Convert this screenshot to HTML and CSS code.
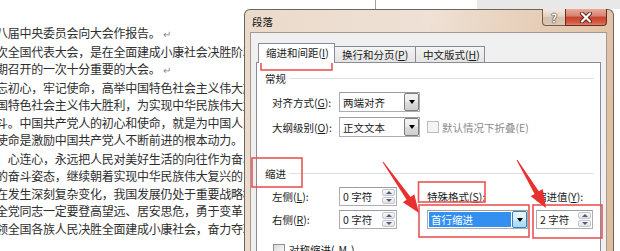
FILE: index.html
```html
<!DOCTYPE html>
<html lang="zh-CN">
<head>
  <meta charset="UTF-8">
  <title>段落</title>
  <link rel="stylesheet" href="styles.css">
</head>
<body>
  <div class="screen">
    <div class="doc-top">
      <span class="rule"></span>
      <span class="ribbon"></span>
    </div>

    <div class="doc">
      <p>八届中央委员会向大会作报告。<span class="mark">↵</span></p>
      <p>次全国代表大会，是在全面建成小康社会决胜阶段</p>
      <p>期召开的一次十分重要的大会。<span class="mark">↵</span></p>
      <p>忘初心，牢记使命，高举中国特色社会主义伟大旗帜</p>
      <p>国特色社会主义伟大胜利，为实现中华民族伟大复兴</p>
      <p>斗。中国共产党人的初心和使命，就是为中国人民</p>
      <p>使命是激励中国共产党人不断前进的根本动力。<span class="mark">↵</span></p>
      <p>、心连心，永远把人民对美好生活的向往作为奋斗目标</p>
      <p>的奋斗姿态，继续朝着实现中华民族伟大复兴的</p>
      <p>在发生深刻复杂变化，我国发展仍处于重要战略机遇期</p>
      <p>全党同志一定要登高望远、居安思危，勇于变革</p>
      <p>领全国各族人民决胜全面建成小康社会，奋力夺取</p>
    </div>

    <div class="dialog">
      <div class="titlebar">
        <span class="title">段落</span>
        <div class="caption-btns">
          <span class="cap help">?</span>
          <span class="cap close">
            <svg width="14" height="11" viewBox="0 0 14 11">
              <path d="M3 1.5 L11 9.5 M11 1.5 L3 9.5" stroke="#5c2219" stroke-width="4" stroke-linecap="round"/>
              <path d="M3 1.5 L11 9.5 M11 1.5 L3 9.5" stroke="#fff" stroke-width="2.2" stroke-linecap="round"/>
            </svg>
          </span>
        </div>
      </div>

      <div class="client">
        <div class="tabs">
          <div class="tab active">缩进和间距(<u>I</u>)</div>
          <div class="tab second">换行和分页(<u>P</u>)</div>
          <div class="tab third">中文版式(<u>H</u>)</div>
        </div>

        <div class="page">
          <div class="group-head"><span>常规</span><i></i></div>
          <div class="general">
            <label>对齐方式(<u>G</u>):</label>
            <div class="combo"><span class="val">两端对齐</span><span class="drop"></span></div>
            <span></span>
            <span></span>
            <label>大纲级别(<u>O</u>):</label>
            <div class="combo"><span class="val">正文文本</span><span class="drop"></span></div>
            <span></span>
            <div class="check disabled"><span class="box"></span>默认情况下折叠(E)</div>
          </div>

          <div class="group-head indent-head"><span>缩进</span><i></i></div>
          <div class="indent">
            <label>左侧(<u>L</u>):</label>
            <div class="spin"><span class="val">0 字符</span><span class="btns"><b class="up"></b><b class="down"></b></span></div>
            <span></span>
            <label>特殊格式(<u>S</u>):</label>
            <span></span>
            <label>缩进值(<u>Y</u>):</label>

            <label>右侧(<u>R</u>):</label>
            <div class="spin"><span class="val">0 字符</span><span class="btns"><b class="up"></b><b class="down"></b></span></div>
            <span></span>
            <div class="combo focus"><span class="val">首行缩进</span><span class="drop"></span></div>
            <span></span>
            <div class="spin"><span class="val">2 字符</span><span class="btns"><b class="up"></b><b class="down"></b></span></div>
          </div>
          <div class="check sym"><span class="box"></span>对称缩进(<u>M</u>)</div>
        </div>
      </div>
    </div>

    <!-- annotation marks drawn over the screenshot -->
    <svg class="notes" width="620" height="251" viewBox="0 0 620 251">
      <g fill="none" stroke="#e95454" stroke-width="1.6">
        <rect x="261" y="45" width="71" height="25"/>
        <rect x="252" y="158" width="50" height="29"/>
        <rect x="418.5" y="182" width="66.5" height="20"/>
        <rect x="419" y="205" width="110" height="32"/>
        <rect x="533" y="205" width="69" height="33"/>
      </g>
      <g fill="#e8302f">
        <polygon points="383.4,161.7 410.6,196.9 414.3,194.3 419,213 402.9,202.3 406.6,199.7 382.6,162.3"/>
        <polygon points="517.4,159.7 538.8,191.3 542.7,189 546,208 530.7,196.2 534.6,193.9 516.6,160.3"/>
      </g>
    </svg>
  </div>
</body>
</html>
```

FILE: styles.css
```css
body {
  margin: 0;
  font-family: "Noto Sans CJK SC", sans-serif;
  color: #1a1a1a;
}
.screen {
  position: relative;
  width: 620px;
  height: 251px;
  overflow: hidden;
  background: #fff;
}

/* document behind the dialog */
.doc-top {
  display: flex;
  height: 9px;
}
.doc-top .rule {
  margin-left: 375px;
  width: 1px;
  background: #a0a0a0;
}
.doc-top .ribbon {
  margin-left: 101px;
  flex: 1;
  background: #e8e8e8;
}
.doc {
  padding-top: 15px;
}
.doc p {
  margin: 0 0 0 -4px;
  font-size: 12px;
  line-height: 17.5px;
  letter-spacing: -0.25px;
  white-space: nowrap;
  color: #2e2e2e;
}
.doc .mark {
  color: #8a8a8a;
  font-size: 10px;
  margin-left: 2px;
}

/* dialog window */
.dialog {
  position: absolute;
  left: 244px;
  top: 9px;
  width: 370px;
  height: 260px;
  box-sizing: border-box;
  border: 1px solid #6d645c;
  border-bottom: none;
  border-radius: 6px 6px 0 0;
  background: linear-gradient(100deg, #eadacb 0%, #eee1d5 45%, #e5cbb3 75%, #dfbc9e 100%);
  font-size: 10.5px;
}
.titlebar {
  display: flex;
  height: 22px;
}
.title {
  padding: 5px 0 0 7px;
  line-height: 14px;
  color: #111;
}
.caption-btns {
  display: flex;
  height: 17px;
  margin: -1px 6px 0 auto;
}
.cap {
  display: flex;
  align-items: center;
  justify-content: center;
  box-sizing: border-box;
  height: 17px;
  border: 1px solid #6e5f52;
  border-top: none;
}
.help {
  width: 24px;
  border-radius: 0 0 0 4px;
  background: linear-gradient(#f3e9e0, #e2d0bf 50%, #d6bfaa 51%, #dcc8b6);
  color: #fff;
  font-weight: bold;
  font-size: 12px;
  text-shadow: 0 0 1px #333, 0 0 1px #333, 0 0 1px #333;
}
.close {
  width: 42px;
  margin-left: -1px;
  border-radius: 0 0 4px 0;
  border-color: #6a2c22;
  background: linear-gradient(#e8aa9c, #d9806f 45%, #c6432c 50%, #d35b44 85%, #e0826c);
}

.client {
  margin: 0 6px 0 5px;
  height: 240px;
  box-sizing: border-box;
  padding: 10px 5px 0 5px;
  border: 1px solid #a3998f;
  background: #f0f0f0;
}
.tabs {
  display: flex;
  align-items: flex-end;
  height: 19px;
  margin-left: 2px;
}
.tab {
  box-sizing: border-box;
  height: 16px;
  margin-left: -1px;
  padding-left: 7px;
  border: 1px solid #898c95;
  border-bottom: none;
  background: linear-gradient(#f4f4f4, #e4e4e4);
  line-height: 15px;
  white-space: nowrap;
}
.tab.active {
  position: relative;
  z-index: 1;
  width: 77px;
  height: 20px;
  margin-left: 0;
  margin-bottom: -1px;
  background: #fff;
  line-height: 18px;
}
.tab.second {
  width: 82px;
}
.tab.third {
  width: 70px;
}
.page {
  height: 230px;
  border: 1px solid #898c95;
  background: #fff;
}

.group-head {
  display: flex;
  align-items: center;
  height: 14px;
  margin: 8px 6px 0 8px;
}
.group-head i {
  flex: 1;
  height: 1px;
  margin-left: 3px;
  background: #dde1e5;
}
.indent-head {
  margin-top: 29px;
}

.general {
  display: grid;
  grid-template-columns: 67px 81px 7px auto;
  grid-template-rows: 20px 20px;
  row-gap: 5px;
  align-items: center;
  margin: 7px 0 0 15px;
}
.indent {
  display: grid;
  grid-template-columns: 67px 58px 30px 101px 8px 57px;
  grid-template-rows: 19px 19px;
  row-gap: 4px;
  align-items: center;
  margin: 7px 0 0 15px;
}
label {
  white-space: nowrap;
}

.combo {
  display: flex;
  align-items: center;
  height: 20px;
  box-sizing: border-box;
  border: 1px solid #abadb3;
  border-top-color: #9a9ca3;
  background: #fff;
}
.combo .val {
  flex: 1;
  padding-left: 3px;
}
.drop {
  display: flex;
  align-items: center;
  justify-content: center;
  align-self: stretch;
  width: 15px;
  box-sizing: border-box;
  border: 1px solid #7d7d7d;
  border-radius: 2px;
  background: linear-gradient(#f3f3f3, #ebebeb 50%, #dcdcdc 51%, #cfcfcf);
}
.drop::after {
  content: "";
  border-left: 3.5px solid transparent;
  border-right: 3.5px solid transparent;
  border-top: 4px solid #000;
}
.combo.focus {
  height: 19px;
}
.combo.focus .val {
  align-self: stretch;
  margin: 1px;
  padding-left: 2px;
  line-height: 15px;
  background: #3390f0;
  color: #fff;
}
.combo.focus .drop {
  border-color: #3c7fb1;
  background: linear-gradient(#eaf6fd, #d9f0fc 50%, #bee6fd 51%, #a7d9f5);
}

.spin {
  display: flex;
  align-items: center;
  height: 19px;
  box-sizing: border-box;
  border: 1px solid #abadb3;
  border-top-color: #9a9ca3;
  background: #fff;
}
.spin .val {
  flex: 1;
  padding-left: 3px;
  white-space: nowrap;
}
.spin .btns {
  display: flex;
  flex-direction: column;
  gap: 1px;
  align-self: stretch;
  width: 13px;
  margin-right: 1px;
  padding: 1px 0;
  box-sizing: border-box;
}
.spin .btns b {
  display: flex;
  align-items: center;
  justify-content: center;
  flex: 1;
  border: 1px solid #c3c6cb;
  border-radius: 2px;
  background: linear-gradient(#f8f8f8, #e3e3e3);
}
.spin .up::after {
  content: "";
  border-left: 3px solid transparent;
  border-right: 3px solid transparent;
  border-bottom: 3px solid #4c5c7c;
}
.spin .down::after {
  content: "";
  border-left: 3px solid transparent;
  border-right: 3px solid transparent;
  border-top: 3px solid #4c5c7c;
}

.check {
  display: flex;
  align-items: center;
  gap: 3px;
  white-space: nowrap;
}
.check .box {
  width: 12px;
  height: 12px;
  box-sizing: border-box;
  border: 1px solid #8f8f8f;
  background: linear-gradient(135deg, #dadada, #fdfdfd);
}
.check.disabled {
  color: #8a8a8a;
}
.check.disabled .box {
  border-color: #bcbcbc;
  background: #f4f4f4;
}
.sym {
  margin: 13px 0 0 16px;
  gap: 4px;
}

.notes {
  position: absolute;
  left: 0;
  top: 0;
  pointer-events: none;
}
```
